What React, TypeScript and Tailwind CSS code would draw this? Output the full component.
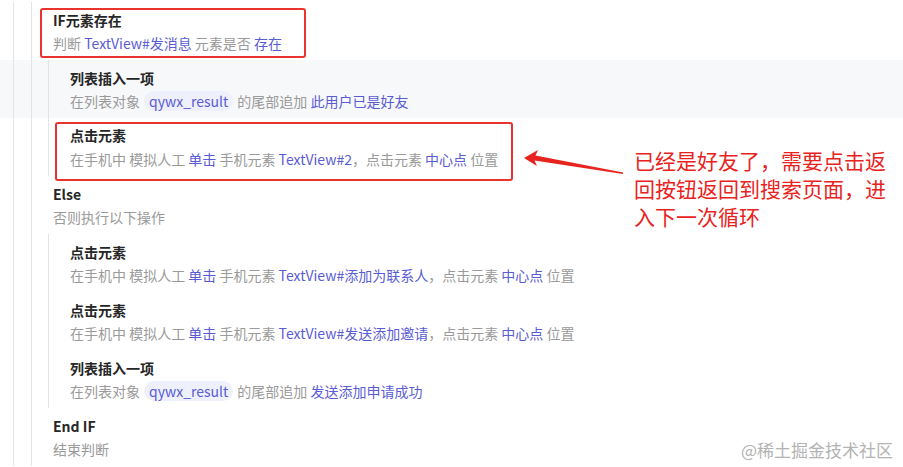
import React from "react";

const Gutter = ({ nested }: { nested?: boolean }) => {
  return (
    <>
      <div className="w-[13px] shrink-0" />
      <div className="w-px shrink-0 bg-[#e4e4e4]" />
      <div className="w-[17px] shrink-0" />
      <div className="w-px shrink-0 bg-[#e4e4e4]" />
      {nested && (
        <>
          <div className="w-[16px] shrink-0" />
          <div className="w-px shrink-0 bg-[#e4e4e4]" />
        </>
      )}
    </>
  );
};

const Blue = ({ children }: { children: React.ReactNode }) => (
  <span className="text-[#5a5cd4]">{children}</span>
);

const Pill = ({ children }: { children: React.ReactNode }) => (
  <span className="mx-[4px] inline-block rounded-[10px] bg-[#eef0fc] px-[5px] leading-[20px] text-[#5a5cd4]">
    {children}
  </span>
);

const Title = ({ children }: { children: React.ReactNode }) => (
  <div className="text-[14px] font-bold leading-[20px] text-[#262626]">{children}</div>
);

const Desc = ({ children, className = "mt-[3px]" }: { children: React.ReactNode; className?: string }) => (
  <div className={"whitespace-nowrap text-[14px] leading-[20px] text-[#9a9a9a] " + className}>{children}</div>
);

const Row = ({
  nested,
  band,
  children,
}: {
  nested?: boolean;
  band?: boolean;
  children: React.ReactNode;
}) => (
  <div className={"flex h-[58px] " + (band ? "bg-[#f7f8fa]" : "")}>
    <Gutter nested={nested} />
    {children}
  </div>
);

const ClickDesc = ({ target }: { target: string }) => (
  <>
    在手机中 模拟人工 <Blue>单击</Blue> 手机元素 <Blue>{target}</Blue>，点击元素 <Blue>中心点</Blue> 位置
  </>
);

const App = () => {
  return (
    <div className="relative h-[467px] w-full overflow-hidden bg-white pt-[2px] font-['Noto_Sans_CJK_SC',sans-serif]">
      <Row>
        <div className="pl-[8px] pt-[6px]">
          <div className="w-[266px] rounded-[3px] border-2 border-[#e8342c] pb-[3px] pl-[11px]">
            <Title>IF元素存在</Title>
            <Desc>
              判断 <Blue>TextView#发消息</Blue> 元素是否 <Blue>存在</Blue>
            </Desc>
          </div>
        </div>
      </Row>

      <Row nested band>
        <div className="pl-[21px] pt-[8px]">
          <Title>列表插入一项</Title>
          <Desc>
            在列表对象<Pill>qywx_result</Pill>的尾部追加 <Blue>此用户已是好友</Blue>
          </Desc>
        </div>
      </Row>

      <Row nested>
        <div className="pl-[6px] pt-[4px]">
          <div className="h-[59px] w-[458px] rounded-[3px] border-2 border-[#e8342c] pl-[13px] pt-[1px]">
            <Title>点击元素</Title>
            <Desc className="mt-[4px]">
              <ClickDesc target="TextView#2" />
            </Desc>
          </div>
        </div>
      </Row>

      <Row>
        <div className="pl-[21px] pt-[8px]">
          <Title>Else</Title>
          <Desc>否则执行以下操作</Desc>
        </div>
      </Row>

      <Row nested>
        <div className="pl-[21px] pt-[8px]">
          <Title>点击元素</Title>
          <Desc>
            <ClickDesc target="TextView#添加为联系人" />
          </Desc>
        </div>
      </Row>

      <Row nested>
        <div className="pl-[21px] pt-[8px]">
          <Title>点击元素</Title>
          <Desc>
            <ClickDesc target="TextView#发送添加邀请" />
          </Desc>
        </div>
      </Row>

      <Row nested>
        <div className="pl-[21px] pt-[8px]">
          <Title>列表插入一项</Title>
          <Desc>
            在列表对象<Pill>qywx_result</Pill>的尾部追加 <Blue>发送添加申请成功</Blue>
          </Desc>
        </div>
      </Row>

      <Row>
        <div className="pl-[21px] pt-[8px]">
          <Title>End IF</Title>
          <Desc>结束判断</Desc>
        </div>
      </Row>

      {/* annotation arrow */}
      <svg
        className="absolute left-[515px] top-[145px]"
        width="115"
        height="35"
        viewBox="0 0 115 35"
      >
        <polygon
          points="9,13 23,5 20.5,10.5 108,27.5 108,29 19.5,15.5 22,21"
          fill="#e8231d"
        />
      </svg>

      <div className="absolute left-[634px] top-[146px] whitespace-nowrap text-[21px] leading-[28px] text-[#e8231d]">
        已经是好友了，需要点击返
        <br />
        回按钮返回到搜索页面，进
        <br />
        入下一次循环
      </div>

      <div className="absolute right-[10px] top-[440px] text-[17px] leading-[20px] text-[#b3b3b3]">
        @稀土掘金技术社区
      </div>
    </div>
  );
};

export default App;
